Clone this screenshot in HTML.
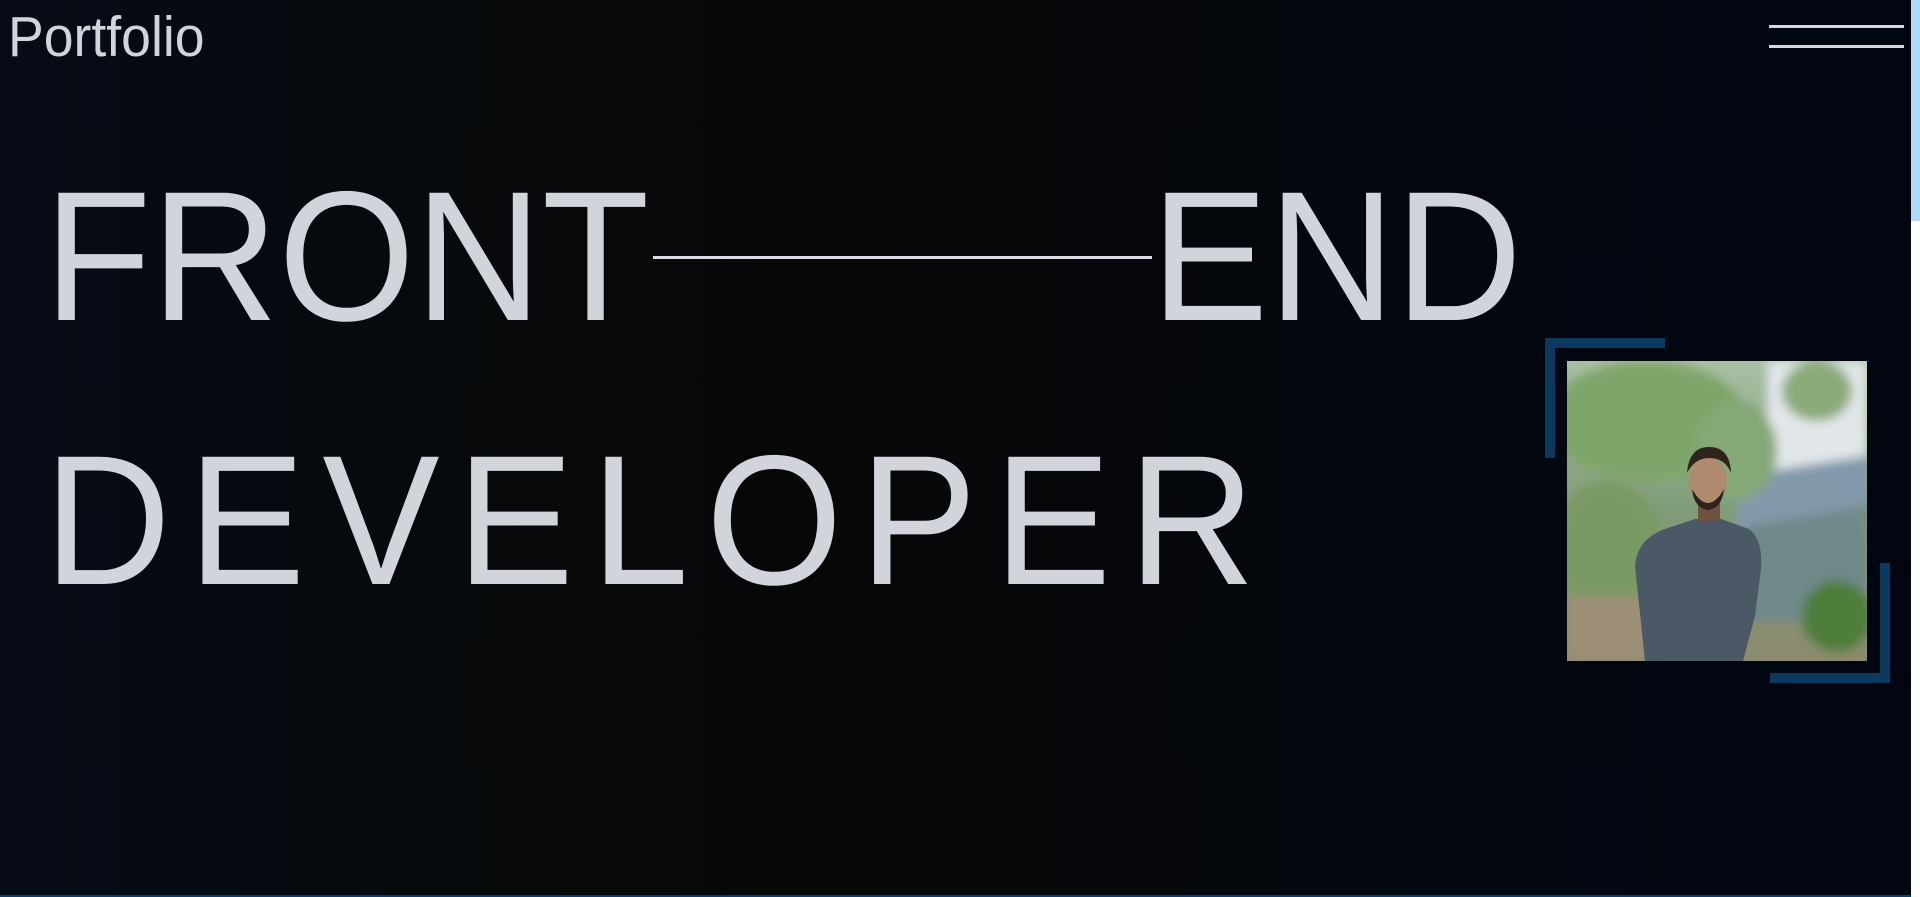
<!DOCTYPE html>
<html><head><meta charset="utf-8"><style>
html,body{margin:0;padding:0;width:1920px;height:897px;overflow:hidden}
body{background:linear-gradient(90deg,#060b16 0%,#070909 30%,#060708 50%,#03070f 75%,#010611 100%);font-family:"Liberation Sans",Arial,sans-serif;color:#d1d5db;position:relative}
.a{position:absolute;white-space:nowrap;line-height:1;transform-origin:0 0}
.big{font-size:185px;transform:scaleX(0.95)}
.bl{position:absolute;background:#0b3a5e}
</style></head><body>
<div class="a" style="left:8px;top:9px;font-size:57px;transform:scaleX(0.94)">Portfolio</div>
<div style="position:absolute;left:1769px;top:25px;width:135px;height:3px;background:#d8d8dc"></div>
<div style="position:absolute;left:1769px;top:45px;width:135px;height:3px;background:#d8d8dc"></div>
<div class="a big" style="left:44px;top:165px">FRONT</div>
<div style="position:absolute;left:653px;top:256px;width:499px;height:3px;background:#d8dce2"></div>
<div class="a big" style="left:1151px;top:165px">END</div>
<div class="a big" style="left:44px;top:429px;letter-spacing:18px">DEVELOPER</div>

<div class="bl" style="left:1545px;top:338px;width:120px;height:10px"></div>
<div class="bl" style="left:1545px;top:338px;width:10px;height:120px"></div>
<div class="bl" style="left:1880px;top:563px;width:10px;height:120px"></div>
<div class="bl" style="left:1770px;top:673px;width:120px;height:10px"></div>

<svg style="position:absolute;left:1567px;top:361px" width="300" height="300" viewBox="0 0 300 300">
<defs>
<filter id="b"><feGaussianBlur stdDeviation="5"/></filter>
<linearGradient id="g" x1="0" y1="0" x2="0" y2="1"><stop offset="0" stop-color="#a9bfa4"/><stop offset="0.5" stop-color="#809c78"/><stop offset="1" stop-color="#8c8a6e"/></linearGradient>
</defs>
<rect width="300" height="300" fill="url(#g)"/>
<g filter="url(#b)">
<rect x="200" y="0" width="100" height="115" fill="#e2e6e9"/>
<path d="M170 115 L300 95 L300 230 L170 230Z" fill="#8299ab"/>
<path d="M180 165 L300 145 L300 260 L180 260Z" fill="#70898a"/>
<ellipse cx="80" cy="60" rx="100" ry="60" fill="#7fa66b"/>
<ellipse cx="170" cy="90" rx="40" ry="50" fill="#84a877"/>
<ellipse cx="250" cy="30" rx="35" ry="30" fill="#8bab7a"/>
<ellipse cx="40" cy="190" rx="55" ry="70" fill="#7a9a63"/>
<ellipse cx="270" cy="255" rx="35" ry="35" fill="#4f7d3b"/>
<rect x="0" y="235" width="80" height="65" fill="#9c8f76"/>
</g>
<path d="M78 300 L68 205 Q70 178 98 168 L128 158 L154 158 L182 168 Q196 178 194 208 L188 255 L176 300Z" fill="#4b5866"/>
<rect x="131" y="140" width="22" height="20" fill="#6f5140"/>
<ellipse cx="141" cy="120" rx="19" ry="24" fill="#b08a6f"/>
<path d="M120 112 Q122 86 142 86 Q163 86 164 112 Q158 97 142 97 Q128 97 120 112Z" fill="#2e241e"/>
<path d="M125 128 Q141 156 157 128 Q155 147 141 149 Q127 147 125 128Z" fill="#2e241e"/>
</svg>

<div style="position:absolute;left:0;top:895px;width:1911px;height:2px;background:#0a3d6e"></div>
<div style="position:absolute;left:1911px;top:0;width:9px;height:897px;background:#ffffff"></div>
<div style="position:absolute;left:1911px;top:0;width:9px;height:221px;background:#acdaf8"></div>
</body></html>
